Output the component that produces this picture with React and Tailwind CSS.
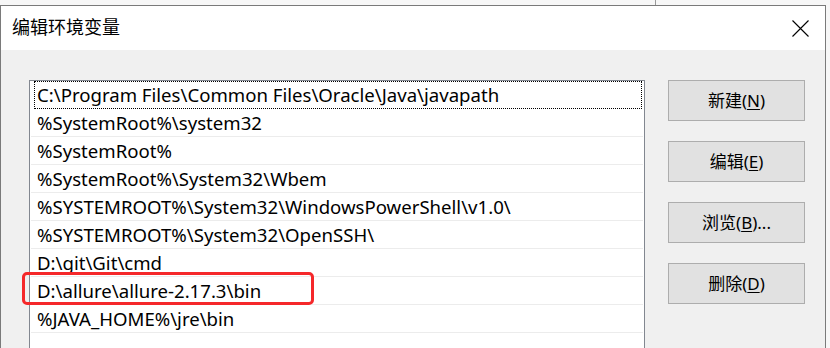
import React from "react";

const paths = [
  "C:\\Program Files\\Common Files\\Oracle\\Java\\javapath",
  "%SystemRoot%\\system32",
  "%SystemRoot%",
  "%SystemRoot%\\System32\\Wbem",
  "%SYSTEMROOT%\\System32\\WindowsPowerShell\\v1.0\\",
  "%SYSTEMROOT%\\System32\\OpenSSH\\",
  "D:\\git\\Git\\cmd",
  "D:\\allure\\allure-2.17.3\\bin",
  "%JAVA_HOME%\\jre\\bin",
  "",
];

const buttons = [
  { label: "新建", key: "N", tail: "" },
  { label: "编辑", key: "E", tail: "" },
  { label: "浏览", key: "B", tail: "..." },
  { label: "删除", key: "D", tail: "" },
];

const font = { fontFamily: '"Noto Sans", "Noto Sans CJK SC", sans-serif' };

function App() {
  return (
    <div
      className="relative w-[830px] h-[348px] overflow-hidden bg-[#f7f7f7] text-black"
      style={font}
    >
      {/* window behind the dialog */}
      <div className="flex h-[5px]">
        <div className="w-[655px]" />
        <div className="w-px bg-[#9a9a9a]" />
      </div>

      {/* dialog */}
      <div className="w-[826px] h-[400px] border-l border-t border-r border-[#7a7a7a] bg-[#f0f0f0]">
        {/* title bar */}
        <div className="h-[44px] bg-white flex items-center justify-between pl-[11px] pr-[16px]">
          <span className="text-[18px] leading-none pb-[2px]">编辑环境变量</span>
          <svg width="17" height="17" viewBox="0 0 17 17">
            <path d="M0.5 0.5 L16.5 16.5 M16.5 0.5 L0.5 16.5" stroke="#000" strokeWidth="1.1" />
          </svg>
        </div>

        {/* body */}
        <div className="flex pt-[30px] pl-[28px]">
          <div className="w-[616px] h-[300px] border border-[#828790] bg-white px-px">
            {paths.map((p, i) => (
              <div
                key={i}
                className={
                  i === 0
                    ? "h-[28px] ml-[3px] mr-px border border-dotted border-black flex items-center pl-[2px] text-[18.6px] whitespace-nowrap"
                    : "h-[28px] border-b border-[#ececec] flex items-center pl-[6px] text-[18.6px] whitespace-nowrap"
                }
              >
                {p}
              </div>
            ))}
          </div>

          <div className="ml-[23px] flex flex-col gap-[20px]">
            {buttons.map((b) => (
              <button
                key={b.key}
                className="w-[137px] h-[41px] bg-[#e1e1e1] border border-[#adadad] text-[17px] flex items-center justify-center"
              >
                {b.label}(<span className="underline underline-offset-2">{b.key}</span>){b.tail}
              </button>
            ))}
          </div>
        </div>
      </div>

      {/* highlight drawn over the list */}
      <div className="absolute left-[22px] top-[272px] w-[292px] h-[33px] border-[3px] border-[#f5282a] rounded-[5px]" />
    </div>
  );
}

export default App;
